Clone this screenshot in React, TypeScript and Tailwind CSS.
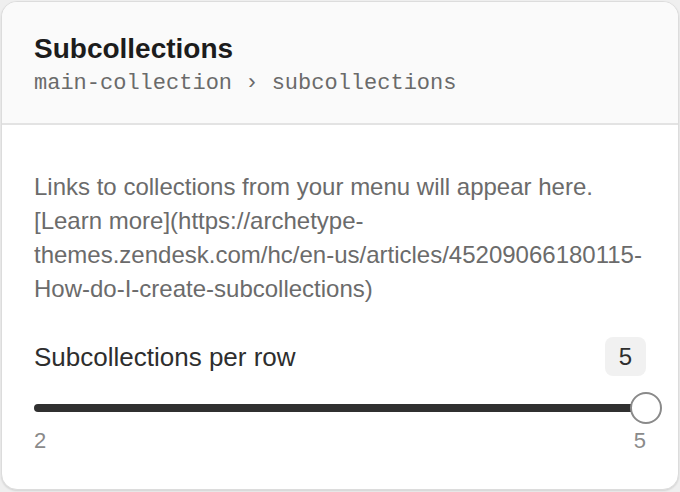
export default function App() {
  return (
    <div className="w-[680px] h-[492px] bg-[#efefef] p-px font-['Liberation_Sans',Arial,sans-serif]">
      <div className="h-[489px] bg-white border border-[#dcdcdc] rounded-2xl shadow-[0_1px_2px_rgba(0,0,0,0.12)] overflow-hidden flex flex-col">
        {/* Header */}
        <div className="bg-[#fafafa] border-b-2 border-[#e3e3e3] px-8 pt-[30px] pb-[25px]">
          <h2 className="text-[28px] leading-[34px] font-bold text-[#1c1c1c]">
            Subcollections
          </h2>
          <p className="mt-[4px] font-['Liberation_Mono',monospace] text-[22px] leading-[28px] text-[#6a6a6a]">
            main-collection › subcollections
          </p>
        </div>

        {/* Body */}
        <div className="px-8 pt-[45px]">
          <p className="text-[24px] leading-[34px] text-[#6b6b6b] break-words">
            Links to collections from your menu will appear here. [Learn more](https://archetype-themes.zendesk.com/hc/en-us/articles/45209066180115-How-do-I-create-subcollections)
          </p>

          <div className="mt-[31px] flex items-center justify-between">
            <span className="text-[26px] leading-[32px] text-[#2e2e2e]">Subcollections per row</span>
            <span className="w-[41px] h-[39px] rounded-lg bg-[#f1f1f1] flex items-center justify-center text-[24px] text-[#2e2e2e]">
              5
            </span>
          </div>

          {/* Slider */}
          <div className="mt-[16px] h-8 flex items-center">
            <div className="relative flex-1 h-2 rounded-full bg-[#303030]">
              <div className="absolute right-[-16px] top-1/2 -translate-y-1/2 w-8 h-8 rounded-full bg-white border-2 border-[#8a8a8a]" />
            </div>
          </div>

          <div className="mt-[2px] flex justify-between text-[22px] leading-[30px] text-[#8a8a8a]">
            <span>2</span>
            <span>5</span>
          </div>
        </div>
      </div>
    </div>
  );
}
